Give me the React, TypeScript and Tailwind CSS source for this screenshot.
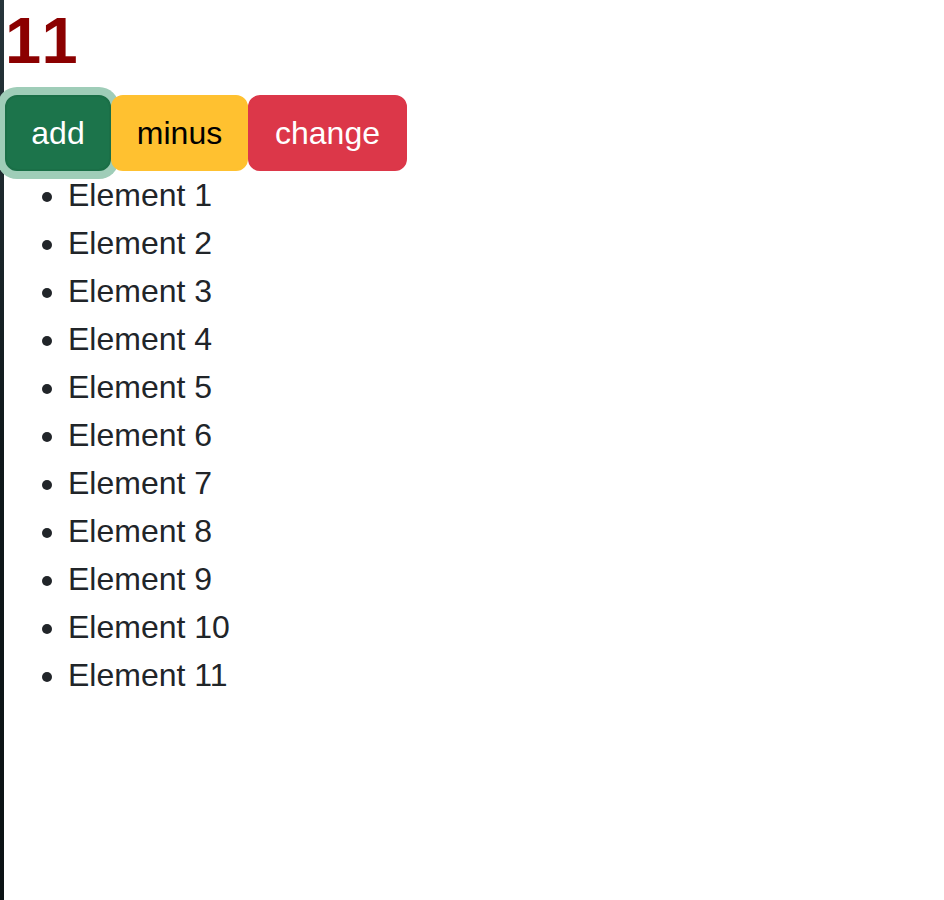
import React from "react";

export default function App() {
  const items = Array.from({ length: 11 }, (_, i) => `Element ${i + 1}`);
  return (
    <div className="flex min-h-[900px] w-full bg-white" style={{ fontFamily: '"Liberation Sans", Arial, Helvetica, sans-serif' }}>
      <div className="w-[4px] shrink-0 bg-gradient-to-b from-[#27353b] via-[#0f181b] to-[#0b1214]" />
      <div className="flex-1">
        <h1 className="m-0 mb-[14px] pl-[1px] text-[65px] font-bold leading-[81px] tracking-[4px] text-[#8b0000]">11</h1>
        <div className="ml-[1px] flex">
          <button className="h-[76px] w-[106px] rounded-[12px] border-2 border-[#1a6f47] bg-[#1c744b] text-[32px] leading-[48px] text-white shadow-[0_0_0_8px_#9fcdb8]">
            add
          </button>
          <button className="h-[76px] w-[137px] rounded-[12px] border-2 border-[#ffc130] bg-[#ffc130] text-[32px] leading-[48px] text-black">
            minus
          </button>
          <button className="h-[76px] w-[159px] rounded-[12px] border-2 border-[#dc3749] bg-[#dc3749] text-[32px] leading-[48px] text-white">
            change
          </button>
        </div>
        <ul className="m-0 mb-[32px] list-disc pl-[64px] text-[32px] leading-[48px] text-[#212529]">
          {items.map((t) => (
            <li key={t}>{t}</li>
          ))}
        </ul>
      </div>
    </div>
  );
}
